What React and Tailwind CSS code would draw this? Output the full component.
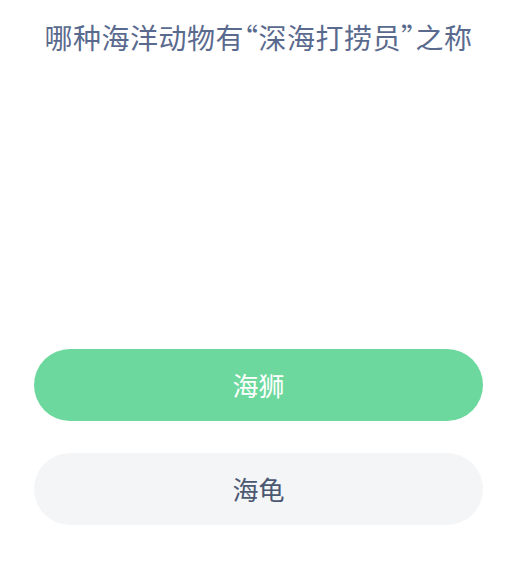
const options = [
  { label: '海狮', selected: true },
  { label: '海龟', selected: false },
];

export default function App() {
  return (
    <div
      className="w-[524px] h-[561px] bg-white overflow-hidden"
      style={{ fontFamily: '"Noto Sans CJK SC", "Noto Sans", sans-serif' }}
    >
      <div className="w-[517px] pt-[19px]">
        <h1 className="text-center text-[28px] leading-[36px] tracking-[0.5px] font-normal text-[#5a6a8e] [font-feature-settings:'halt']">
          哪种海洋动物有“深海打捞员”之称
        </h1>

        {/* picture area, washed out to almost white */}
        <div className="h-[294px]" />

        <div className="flex flex-col gap-[32px] px-[34px]">
          {options.map((opt) => (
            <button
              key={opt.label}
              className={`h-[72px] w-full rounded-full flex items-center justify-center text-[26px] leading-none ${
                opt.selected ? 'bg-[#6cd89d] text-white' : 'bg-[#f4f5f7] text-[#4b5871]'
              }`}
            >
              {opt.label}
            </button>
          ))}
        </div>
      </div>
    </div>
  );
}
